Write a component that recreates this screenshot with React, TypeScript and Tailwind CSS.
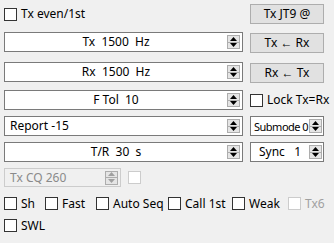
import React from "react";

function Arrows({ disabled = false, cls = "mr-[2px]" }: { disabled?: boolean; cls?: string }) {
  const c = disabled ? "#a0a0a0" : "#000000";
  return (
    <div className={`flex flex-col shrink-0 w-[13px] h-[14px] border border-[#adadad] bg-[#e5e5e5] ${cls}`}>
      <div className="flex-1 flex items-center justify-center border-b border-[#adadad]">
        <svg width="7" height="4" viewBox="0 0 7 4">
          <path d="M0 4 L3.5 0 L7 4 Z" fill={c} />
        </svg>
      </div>
      <div className="flex-1 flex items-center justify-center">
        <svg width="7" height="4" viewBox="0 0 7 4">
          <path d="M0 0 L3.5 4 L7 0 Z" fill={c} />
        </svg>
      </div>
    </div>
  );
}

function Spin({
  text,
  w = "w-[239px]",
  align = "center",
  disabled = false,
  h = "h-[20px]",
}: {
  text: string;
  w?: string;
  align?: "center" | "left";
  disabled?: boolean;
  h?: string;
}) {
  return (
    <div
      className={`${w} ${h} flex items-center border ${
        disabled ? "border-[#cccccc] bg-[#f0f0f0] text-[#8a8a8a]" : "border-[#7a7a7a] bg-white"
      }`}
    >
      <div
        className={`flex-1 whitespace-pre ${
          align === "center" ? "text-center" : "text-left pl-[5px]"
        }`}
      >
        {text}
      </div>
      <Arrows disabled={disabled} />
    </div>
  );
}

function Check({ label, disabled = false }: { label?: string; disabled?: boolean }) {
  return (
    <div className="flex items-center">
      <div
        className={`w-[13px] h-[13px] border bg-white ${
          disabled ? "border-[#cccccc]" : "border-[#333333]"
        }`}
      />
      {label && (
        <span className={`ml-[4px] whitespace-nowrap ${disabled ? "text-[#a0a0a0]" : ""}`}>
          {label}
        </span>
      )}
    </div>
  );
}

function Btn({ text, cls = "" }: { text: string; cls?: string }) {
  return (
    <div
      className={`w-[74px] h-[20px] flex items-center justify-center border border-[#adadad] bg-[#e1e1e1] whitespace-pre ${cls}`}
    >
      {text}
    </div>
  );
}

export default function App() {
  return (
    <div className="w-[334px] h-[243px] bg-[#f0f0f0] font-['Noto_Sans',sans-serif] text-[12px] leading-none text-black overflow-hidden">
      <div className="flex flex-col pl-[4px] pt-[4px]">
        <div className="flex items-center gap-[7px] h-[20px]">
          <div className="w-[239px]">
            <Check label="Tx even/1st" />
          </div>
          <Btn text="Tx JT9 @" />
        </div>

        <div className="flex gap-[7px] mt-[8px] h-[21px]">
          <Spin text="Tx  1500  Hz" />
          <Btn text="Tx ← Rx" cls="self-end" />
        </div>

        <div className="flex gap-[7px] mt-[9px] h-[21px]">
          <Spin text="Rx  1500  Hz" />
          <Btn text="Rx ← Tx" cls="self-end" />
        </div>

        <div className="flex items-center gap-[7px] mt-[7px] h-[20px]">
          <Spin text="F Tol  10" />
          <Check label="Lock Tx=Rx" />
        </div>

        <div className="flex items-center gap-[7px] mt-[6px] h-[20px]">
          <Spin text="Report -15" align="left" />
          <div className="w-[74px] h-[20px] flex items-center border border-[#7a7a7a] bg-white">
            <span className="flex-1 min-w-0 pl-[3px] whitespace-nowrap text-[11px] tracking-[-0.5px]">
              Submode 0
            </span>
            <Arrows cls="mr-[1px]" />
          </div>
        </div>

        <div className="flex items-center gap-[7px] mt-[6px] h-[20px]">
          <Spin text="T/R  30  s" />
          <div className="w-[74px] h-[20px] flex items-center border border-[#7a7a7a] bg-white">
            <span className="flex-1 text-center whitespace-pre">Sync   1</span>
            <Arrows cls="mr-[1px]" />
          </div>
        </div>

        <div className="flex items-center gap-[7px] mt-[6px] h-[19px]">
          <Spin text="Tx CQ 260" w="w-[117px]" align="left" h="h-[19px]" disabled />
          <Check disabled />
        </div>

        <div className="flex items-center mt-[10px] h-[13px]">
          <div className="w-[41px]">
            <Check label="Sh" />
          </div>
          <div className="w-[51px]">
            <Check label="Fast" />
          </div>
          <div className="w-[72px]">
            <Check label="Auto Seq" />
          </div>
          <div className="w-[64px]">
            <Check label="Call 1st" />
          </div>
          <div className="w-[56px]">
            <Check label="Weak" />
          </div>
          <Check label="Tx6" disabled />
        </div>

        <div className="flex items-center mt-[9px] h-[13px]">
          <Check label="SWL" />
        </div>
      </div>
    </div>
  );
}
